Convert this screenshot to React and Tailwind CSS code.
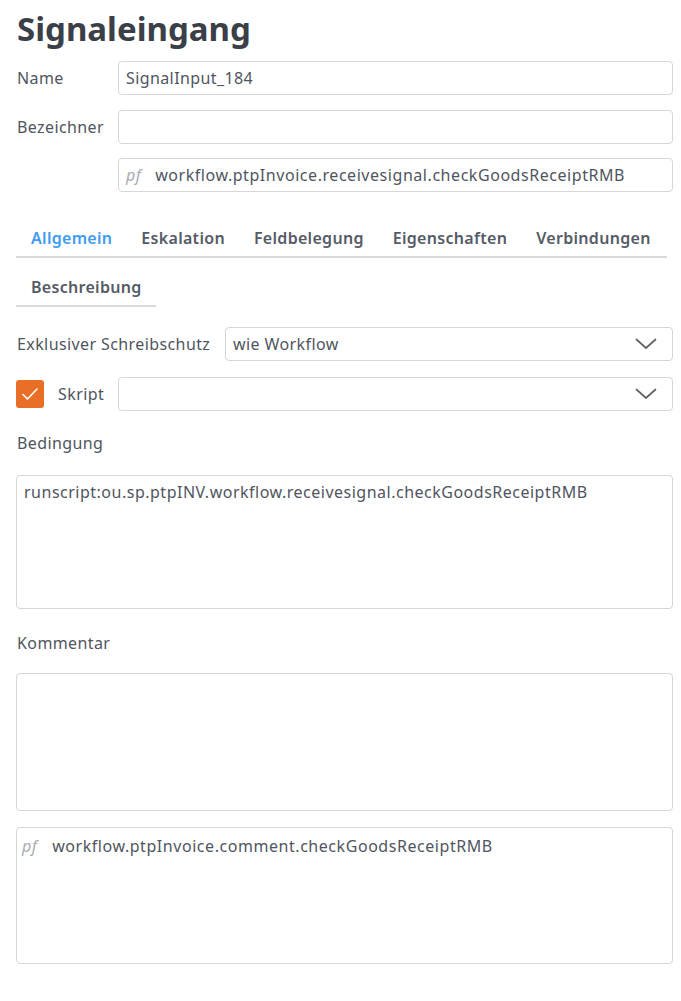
import React from "react";

const font = { fontFamily: '"Noto Sans", "Open Sans", sans-serif' };

function Chevron() {
  return (
    <svg width="22" height="12" viewBox="0 0 22 12" fill="none" className="shrink-0">
      <path d="M1.5 1.5 L11 10 L20.5 1.5" stroke="#5f6368" strokeWidth="1.7" strokeLinecap="round" strokeLinejoin="round" />
    </svg>
  );
}

function Input({ children }) {
  return (
    <div className="flex-1 h-[34px] border border-[#d6d6d6] rounded-[4px] bg-white flex items-center px-[7px] text-[16px] tracking-[0.4px] text-[#4f5560]">
      {children}
    </div>
  );
}

function Select({ value }) {
  return (
    <div className="flex-1 h-[34px] border border-[#d6d6d6] rounded-[4px] bg-white flex items-center justify-between pl-[7px] pr-[15px] text-[16px] tracking-[0.4px] text-[#4f5560]">
      <span>{value}</span>
      <Chevron />
    </div>
  );
}

function Tab({ children, active }) {
  return (
    <div className={`px-[14.5px] h-[36px] flex items-center text-[16px] tracking-[0.3px] font-semibold ${active ? "text-[#3e9cf0]" : "text-[#555b66]"}`}>
      {children}
    </div>
  );
}

export default function App() {
  return (
    <div style={font} className="w-[681px] min-h-[1001px] bg-white pl-4 pr-2 pt-[9px] text-[#4f5560]">
      <h1 className="text-[33px] leading-[40px] font-bold text-[#3b3f48] pl-[1px]">Signaleingang</h1>

      <div className="mt-[12px] flex items-center">
        <div className="w-[102px] text-[16px] tracking-[0.4px] pl-[1px]">Name</div>
        <Input>SignalInput_184</Input>
      </div>
      <div className="mt-[15px] flex items-center">
        <div className="w-[102px] text-[16px] tracking-[0.4px] pl-[1px]">Bezeichner</div>
        <Input />
      </div>
      <div className="mt-[14px] flex items-center">
        <div className="w-[102px]" />
        <Input>
          <span className="italic text-[#a8acb3] mr-[14px] pl-[-2px]">pf</span>
          <span className="tracking-[0.55px]">workflow.ptpInvoice.receivesignal.checkGoodsReceiptRMB</span>
        </Input>
      </div>

      <div className="mt-[28px] flex w-[651px] border-b-2 border-[#d9d9d9] pl-[0.5px]">
        <Tab active>Allgemein</Tab>
        <Tab>Eskalation</Tab>
        <Tab>Feldbelegung</Tab>
        <Tab>Eigenschaften</Tab>
        <Tab>Verbindungen</Tab>
      </div>
      <div className="mt-[11px] flex w-[140px] border-b-2 border-[#d9d9d9] pl-[0.5px]">
        <Tab>Beschreibung</Tab>
      </div>

      <div className="mt-[20px] flex items-center">
        <div className="w-[209px] text-[16px] tracking-[0.4px] pl-[1px]">Exklusiver Schreibschutz</div>
        <Select value="wie Workflow" />
      </div>
      <div className="mt-[16px] flex items-center">
        <div className="w-[28px] h-[28px] rounded-[3px] bg-[#e96f27] flex items-center justify-center">
          <svg width="18" height="14" viewBox="0 0 18 14" fill="none">
            <path d="M2 7.5 L6.5 12 L16 2" stroke="#ffffff" strokeWidth="1.6" strokeLinecap="round" strokeLinejoin="round" />
          </svg>
        </div>
        <div className="w-[74px] pl-[14px] text-[16px] tracking-[0.4px]">Skript</div>
        <Select value="" />
      </div>

      <div className="mt-[21px] text-[16px] tracking-[0.4px] pl-[1px] leading-[22px]">Bedingung</div>
      <div className="mt-[21px] h-[134px] border border-[#d6d6d6] rounded-[4px] px-[7px] pt-[4px] text-[16px] tracking-[0.5px]">
        runscript:ou.sp.ptpINV.workflow.receivesignal.checkGoodsReceiptRMB
      </div>

      <div className="mt-[23px] text-[16px] tracking-[0.4px] pl-[1px] leading-[22px]">Kommentar</div>
      <div className="mt-[19px] h-[138px] border border-[#d6d6d6] rounded-[4px]" />

      <div className="mt-[16px] h-[137px] border border-[#d6d6d6] rounded-[4px] px-[5px] pt-[6px] text-[16px] tracking-[0.4px] flex items-start">
        <span className="italic text-[#a8acb3] mr-[15px]">pf</span>
        <span className="tracking-[0.55px]">workflow.ptpInvoice.comment.checkGoodsReceiptRMB</span>
      </div>
    </div>
  );
}
